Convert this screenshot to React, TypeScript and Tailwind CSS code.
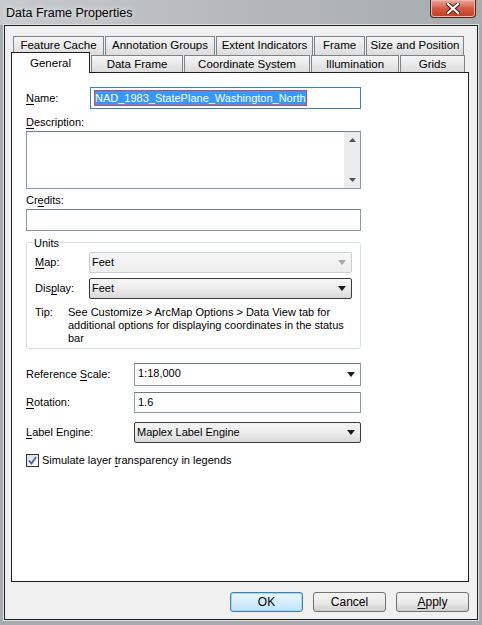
import React from "react";

const font = "font-['Segoe_UI','Liberation_Sans',sans-serif]";

function Ul({ children }: { children: React.ReactNode }) {
  return <span className="underline underline-offset-[1.5px]">{children}</span>;
}

function Arrow({ light }: { light?: boolean }) {
  return (
    <svg width="8" height="5" viewBox="0 0 8 5" className="shrink-0">
      <path d="M0 0 L8 0 L4 5 Z" fill={light ? "#a8a8a8" : "#1a1a1a"} />
    </svg>
  );
}

type Tab = { label: string; w: string };

const backTabs: Tab[] = [
  { label: "Feature Cache", w: "w-[91px]" },
  { label: "Annotation Groups", w: "w-[110px]" },
  { label: "Extent Indicators", w: "w-[97px]" },
  { label: "Frame", w: "w-[51px]" },
  { label: "Size and Position", w: "w-[98px]" },
];

const frontTabs: Tab[] = [
  { label: "Data Frame", w: "w-[92px]" },
  { label: "Coordinate System", w: "w-[126px]" },
  { label: "Illumination", w: "w-[88px]" },
  { label: "Grids", w: "w-[65px]" },
];

function TabButton({ tab, h }: { tab: Tab; h: string }) {
  return (
    <div
      className={`${tab.w} ${h} flex items-center justify-center border border-b-0 border-[#7d8188] bg-gradient-to-b from-[#f6f6f6] to-[#dcdcdc] text-[11.5px] text-black`}
    >
      {tab.label}
    </div>
  );
}

function Button({ children, primary }: { children: React.ReactNode; primary?: boolean }) {
  return (
    <button
      className={`flex h-[20px] w-[73px] items-center justify-center rounded-[3px] border text-[12px] text-black ${
        primary
          ? "border-[#3c7fb1] bg-gradient-to-b from-[#eaf6fd] to-[#bee6fd] shadow-[inset_0_0_0_1px_#a7d9f5]"
          : "border-[#707070] bg-gradient-to-b from-[#f2f2f2] via-[#ebebeb] to-[#cfcfcf]"
      }`}
    >
      {children}
    </button>
  );
}

export default function App() {
  return (
    <div className={`${font} flex h-[625px] w-[482px] flex-col bg-[#a6abad] text-[11px] text-black`}>
      {/* title bar */}
      <div className="flex h-[25px] shrink-0 items-start justify-between bg-gradient-to-r from-[#c8cbcd] via-[#b4b8ba] to-[#a7acae] pl-[6px] pr-[6px]">
        <span className="mt-[4px] text-[12.5px] text-black [text-shadow:0_0_6px_#ffffff]">
          Data Frame Properties
        </span>
        <div className="flex h-[18px] w-[46px] items-center justify-center rounded-b-[4px] border border-t-0 border-[#5a1c14] bg-gradient-to-b from-[#e9a99c] via-[#d25a43] to-[#c13b22] shadow-[inset_0_0_0_1px_#f0b8aa]">
          <svg width="14" height="11" viewBox="0 0 14 11">
            <path
              d="M2 1 L12 10 M12 1 L2 10"
              stroke="#3b1a14"
              strokeWidth="4"
              strokeLinecap="square"
            />
            <path
              d="M2 1 L12 10 M12 1 L2 10"
              stroke="#ffffff"
              strokeWidth="2.2"
              strokeLinecap="square"
            />
          </svg>
        </div>
      </div>

      {/* body */}
      <div className="mx-[4px] mb-[5px] flex flex-1 flex-col border border-[#1e1e1e] bg-[#f0f0f0] shadow-[0_0_0_1px_#dfe3e5]">
        <div className="ml-[6px] mr-[8px] mt-[10px] flex flex-1 flex-col">
          {/* tabs */}
          <div className="flex flex-col">
            <div className="ml-[2px] flex h-[19px] gap-[1px]">
              {backTabs.map((t) => (
                <TabButton key={t.label} tab={t} h="h-[19px] pb-[1px]" />
              ))}
            </div>
            <div className="relative z-10 flex h-[17px] items-end">
              <div className="-mb-px -mt-[3px] flex h-[21px] w-[79px] items-start justify-center border border-b-0 border-[#1e1e1e] bg-white pt-[2px] text-[11.5px]">
                General
              </div>
              <div className="ml-[1px] flex gap-[1px]">
                {frontTabs.map((t) => (
                  <TabButton key={t.label} tab={t} h="h-[17px] pt-[1px]" />
                ))}
              </div>
            </div>
          </div>

          {/* panel */}
          <div className="flex h-[510px] flex-col border border-[#1e1e1e] bg-white">
            <div className="ml-[14px] mt-[14px] flex w-[335px] flex-col">
              <div className="flex h-[22px] items-center">
                <span className="w-[64px]">
                  <Ul>N</Ul>ame:
                </span>
                <div className="flex h-[22px] w-[271px] items-center border border-[#3c7fb1] px-[4px]">
                  <span className="bg-[#3399ff] leading-[14px] text-white outline outline-1 outline-[#e04040]">
                    NAD_1983_StatePlane_Washington_North
                  </span>
                </div>
              </div>

              <div className="mt-[6px] h-[15px] leading-[15px]">
                <Ul>D</Ul>escription:
              </div>
              <div className="mt-[1px] flex h-[58px] border border-[#8d99a6] border-t-[#6f7c89]">
                <div className="flex-1" />
                <div className="flex w-[16px] flex-col items-center justify-between bg-[#ececec] py-[6px]">
                  <svg width="7" height="4" viewBox="0 0 7 4">
                    <path d="M0 4 L3.5 0 L7 4 Z" fill="#505050" />
                  </svg>
                  <svg width="7" height="4" viewBox="0 0 7 4">
                    <path d="M0 0 L7 0 L3.5 4 Z" fill="#505050" />
                  </svg>
                </div>
              </div>

              <div className="mt-[4px] h-[15px] leading-[15px]">
                Cr<Ul>e</Ul>dits:
              </div>
              <div className="mt-[1px] h-[22px] border border-[#8d99a6] border-t-[#6f7c89]" />

              {/* units group */}
              <div className="relative mt-[11px] flex h-[107px] flex-col rounded-[3px] border border-[#d5dfe5] pl-[8px]">
                <span className="-mt-[7px] ml-[-2px] w-fit bg-white px-[1px] leading-[14px]">Units</span>
                <div className="mt-[2px] flex h-[21px] items-center">
                  <span className="w-[54px]">
                    <Ul>M</Ul>ap:
                  </span>
                  <div className="flex h-[21px] w-[263px] items-center justify-between rounded-[2px] border border-[#c9cdd2] bg-gradient-to-b from-[#f7f7f7] to-[#ededed] pl-[2px] pr-[5px]">
                    <span>Feet</span>
                    <Arrow light />
                  </div>
                </div>
                <div className="mt-[5px] flex h-[21px] items-center">
                  <span className="w-[54px]">
                    Dis<Ul>p</Ul>lay:
                  </span>
                  <div className="flex h-[21px] w-[263px] items-center justify-between rounded-[2px] border border-[#3a3a3a] bg-gradient-to-b from-[#f4f4f4] via-[#ececec] to-[#d9d9d9] pl-[2px] pr-[5px]">
                    <span>Feet</span>
                    <Arrow />
                  </div>
                </div>
                <div className="mt-[7px] flex leading-[13px]">
                  <span className="w-[33px] shrink-0">Tip:</span>
                  <span className="w-[285px]">
                    See Customize &gt; ArcMap Options &gt; Data View tab for additional options for
                    displaying coordinates in the status bar
                  </span>
                </div>
              </div>

              <div className="mt-[14px] flex h-[23px] items-center">
                <span className="w-[108px]">
                  Reference <Ul>S</Ul>cale:
                </span>
                <div className="flex h-[23px] w-[227px] items-center justify-between border border-[#8d99a6] border-t-[#6f7c89] pl-[3px] pr-[5px]">
                  <span className="-mt-[3px]">1:18,000</span>
                  <Arrow />
                </div>
              </div>

              <div className="mt-[6px] flex h-[21px] items-center">
                <span className="w-[108px]">
                  <Ul>R</Ul>otation:
                </span>
                <div className="flex h-[21px] w-[227px] items-center border border-[#8d99a6] border-t-[#6f7c89] pl-[3px]">
                  1.6
                </div>
              </div>

              <div className="mt-[9px] flex h-[21px] items-center">
                <span className="w-[108px]">
                  <Ul>L</Ul>abel Engine:
                </span>
                <div className="flex h-[21px] w-[227px] items-center justify-between rounded-[2px] border border-[#3a3a3a] bg-gradient-to-b from-[#f4f4f4] via-[#ececec] to-[#d9d9d9] pl-[2px] pr-[5px]">
                  <span>Maplex Label Engine</span>
                  <Arrow />
                </div>
              </div>

              <div className="mt-[11px] flex h-[13px] items-center gap-[3px]">
                <div className="flex h-[13px] w-[13px] items-center justify-center border border-[#333] bg-gradient-to-br from-[#dcdcdc] to-[#fbfbfb]">
                  <svg width="9" height="9" viewBox="0 0 9 9">
                    <path d="M1 4.5 L3.5 7.5 L8 1" stroke="#4a5fa8" strokeWidth="1.8" fill="none" />
                  </svg>
                </div>
                <span>
                  Simulate layer <Ul>t</Ul>ransparency in legends
                </span>
              </div>
            </div>
          </div>

          {/* buttons */}
          <div className="mt-[10px] flex justify-end gap-[10px]">
            <Button primary>OK</Button>
            <Button>Cancel</Button>
            <Button>
              <Ul>A</Ul>pply
            </Button>
          </div>
        </div>
      </div>
    </div>
  );
}
